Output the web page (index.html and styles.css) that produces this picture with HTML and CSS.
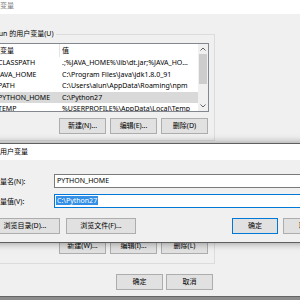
FILE: index.html
```html
<!DOCTYPE html>
<html lang="zh-CN">
<head>
    <meta charset="UTF-8">
    <title>编辑用户变量</title>
    <link rel="stylesheet" href="styles.css">
</head>
<body>
    <div class="desk">
        <!-- 环境变量 窗口 -->
        <div class="env">
            <div class="titlebar">环境变量</div>
            <div class="env-body">
                <fieldset class="group">
                    <legend>alun 的用户变量(U)</legend>
                    <div class="listbox">
                        <div class="list">
                            <div class="row head"><span class="c1">变量</span><span class="c2">值</span></div>
                            <div class="row"><span class="c1">CLASSPATH</span><span class="c2">.;%JAVA_HOME%\lib\dt.jar;%JAVA_HOME%\lib\tools.jar;</span></div>
                            <div class="row"><span class="c1">JAVA_HOME</span><span class="c2">C:\Program Files\Java\jdk1.8.0_91</span></div>
                            <div class="row"><span class="c1">PATH</span><span class="c2">C:\Users\alun\AppData\Roaming\npm</span></div>
                            <div class="row sel"><span class="c1">PYTHON_HOME</span><span class="c2">C:\Python27</span></div>
                            <div class="row"><span class="c1">TEMP</span><span class="c2">%USERPROFILE%\AppData\Local\Temp</span></div>
                        </div>
                        <div class="scrollbar">
                            <div class="arrow">
                                <svg width="6" height="4" viewBox="0 0 6 4"><path d="M0.5 3.5 L3 1 L5.5 3.5" fill="none" stroke="#606060" stroke-width="1"/></svg>
                            </div>
                            <div class="track"><div class="thumb"></div></div>
                            <div class="arrow">
                                <svg width="6" height="4" viewBox="0 0 6 4"><path d="M0.5 0.5 L3 3 L5.5 0.5" fill="none" stroke="#606060" stroke-width="1"/></svg>
                            </div>
                        </div>
                    </div>
                    <div class="btns">
                        <button>新建(N)...</button>
                        <button>编辑(E)...</button>
                        <button>删除(D)</button>
                    </div>
                </fieldset>

                <fieldset class="group sys">
                    <legend>系统变量(S)</legend>
                    <div class="listbox">
                        <div class="list">
                            <div class="row head"><span class="c1">变量</span><span class="c2">值</span></div>
                            <div class="row"><span class="c1">ComSpec</span><span class="c2">C:\Windows\system32\cmd.exe</span></div>
                            <div class="row"><span class="c1">OS</span><span class="c2">Windows_NT</span></div>
                            <div class="row"><span class="c1">Path</span><span class="c2">C:\ProgramData\Oracle\Java\javapath</span></div>
                        </div>
                    </div>
                    <div class="btns">
                        <button>新建(W)...</button>
                        <button>编辑(I)...</button>
                        <button>删除(L)</button>
                    </div>
                </fieldset>

                <div class="btns footer">
                    <button>确定</button>
                    <button>取消</button>
                </div>
            </div>
        </div>

        <!-- 编辑用户变量 对话框 -->
        <div class="dlg">
            <div class="dlg-title">编辑用户变量</div>
            <div class="dlg-body">
                <div class="field">
                    <label>变量名(N):</label>
                    <div class="input">PYTHON_HOME</div>
                </div>
                <div class="field">
                    <label>变量值(V):</label>
                    <div class="input focus"><span class="hl">C:\Python27</span></div>
                </div>
                <div class="dlg-btns">
                    <button class="wide">浏览目录(D)...</button>
                    <button class="wide">浏览文件(F)...</button>
                    <button class="ok default">确定</button>
                    <button>取消</button>
                </div>
            </div>
        </div>
    </div>
</body>
</html>
```

FILE: styles.css
```css
* {
    box-sizing: border-box;
}

body {
    margin: 0;
    font-family: "Noto Sans", "Noto Sans CJK SC", sans-serif;
    font-size: 7px;
    color: #000;
}

.desk {
    width: 300px;
    height: 300px;
    overflow: hidden;
    position: relative;
    background: #8c8c8c;
}

/* 背景窗口 */
.env {
    margin-left: -60px;
    width: 400px;
    background: #f0f0f0;
    border-bottom: 1px solid #646464;
}

.titlebar {
    height: 14px;
    line-height: 12px;
    padding-left: 46px;
    background: #fff;
    color: #7a7a7a;
}

.env-body {
    padding: 15px 0 6px 10px;
}

.group {
    margin: 0;
    min-width: 0;
    width: 265px;
    border: 1px solid #dcdcdc;
    padding: 4px 5px 6px 40px;
}

.group legend {
    padding: 0 2px;
    line-height: 10px;
}

.group.sys {
    margin-top: 6px;
    padding-bottom: 9px;
}

.listbox {
    display: flex;
    height: 69px;
    border: 1px solid #828790;
    background: #fff;
}

.sys .listbox {
    height: 71px;
}

.list {
    flex: 1;
    min-width: 0;
    overflow: hidden;
}

.row {
    display: flex;
    height: 11.5px;
    line-height: 11.5px;
    white-space: nowrap;
}

.row.head {
    height: 13px;
    line-height: 13px;
}

.row.sel {
    background: #d9d9d9;
}

.c1 {
    flex: none;
    width: 68px;
    padding-left: 6px;
    overflow: hidden;
}

.head .c1 {
    padding-left: 8px;
    border-right: 1px solid #e5e5e5;
}

.c2 {
    flex: 1;
    min-width: 0;
    padding: 0 4px 0 2px;
    overflow: hidden;
    text-overflow: ellipsis;
}

.scrollbar {
    width: 10px;
    flex: none;
    display: flex;
    flex-direction: column;
    background: #f0f0f0;
}

.arrow {
    height: 10px;
    display: flex;
    align-items: center;
    justify-content: center;
}

.track {
    flex: 1;
}

.thumb {
    margin: 0 1px;
    height: 30px;
    background: #cdcdcd;
}

.btns {
    display: flex;
    justify-content: flex-end;
    gap: 4px;
    margin-top: 6px;
    padding-right: 1px;
}

button {
    font: inherit;
    color: #000;
    width: 47px;
    height: 16px;
    line-height: 14px;
    padding: 0;
    background: #e1e1e1;
    border: 1px solid #adadad;
}

.footer {
    width: 265px;
    margin-top: 10px;
    gap: 3px;
    padding-right: 2px;
}

/* 编辑用户变量 对话框 */
.dlg {
    position: absolute;
    top: 143px;
    left: -40px;
    width: 380px;
    background: #f0f0f0;
    border: 1px solid #5f5f5f;
    box-shadow: 0 0 8px rgba(0, 0, 0, 0.4);
}

.dlg-title {
    height: 16px;
    line-height: 16px;
    padding-left: 25px;
    background: #fff;
}

.dlg-body {
    padding: 14px 10px 8px 29px;
}

.field {
    display: grid;
    grid-template-columns: 64px 1fr;
    align-items: center;
}

.field + .field {
    margin-top: 6px;
}

.field label {
    padding-left: 3px;
}

.input {
    height: 14px;
    line-height: 12px;
    padding-left: 2px;
    border: 1px solid #7a7a7a;
    background: #fff;
    white-space: nowrap;
}

.input.focus {
    border-color: #0078d7;
    padding-left: 1px;
}

.hl {
    background: #3390e6;
    color: #fff;
    padding: 0 1px;
}

.dlg-btns {
    display: flex;
    margin-top: 10px;
}

.dlg-btns button {
    width: 46px;
    margin-left: 5px;
}

.dlg-btns .wide {
    width: 70px;
    margin-left: 6px;
}

.dlg-btns .wide:first-child {
    margin-left: 0;
}

.dlg-btns .ok {
    margin-left: auto;
}

button.default {
    border-color: #0078d7;
}
```
